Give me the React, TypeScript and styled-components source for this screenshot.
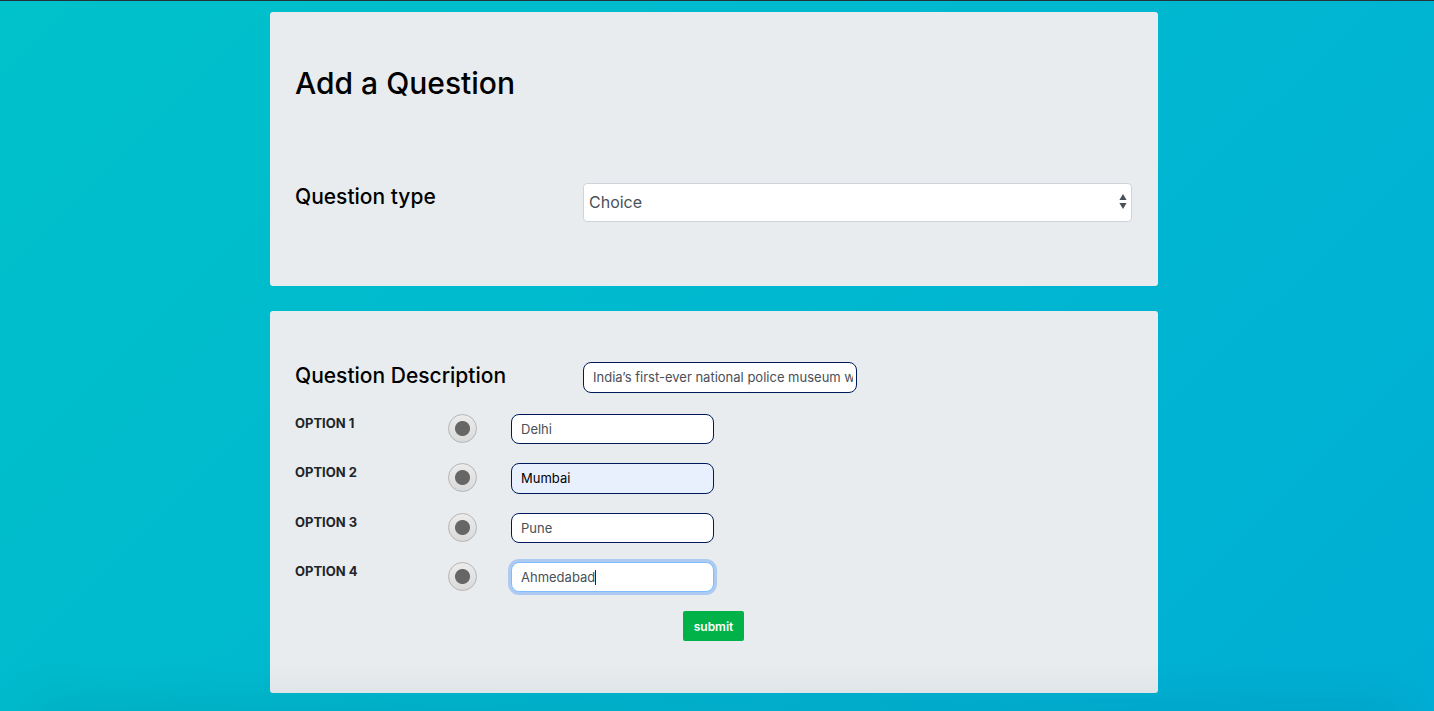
import React, { useState } from "react";
import styled, { createGlobalStyle } from "styled-components";

const GlobalStyle = createGlobalStyle`
  * { box-sizing: border-box; }
  body {
    margin: 0;
    font-family: Inter, "Liberation Sans", sans-serif;
    font-size: 13px;
    line-height: 20px;
    color: #212529;
  }
`;

const Page = styled.div`
  min-height: 100vh;
  padding: 11px 6px 18px 0;
  border-top: 1px solid #24323a;
  background: linear-gradient(135deg, #00c2ca, #00aed5);
  overflow: hidden;
`;

const BottomShade = styled.div`
  position: fixed;
  left: 30px;
  right: 30px;
  bottom: -20px;
  height: 20px;
  pointer-events: none;
  box-shadow: 0 0 50px rgba(0, 40, 60, 0.2);
`;

const Form = styled.form`
  display: flex;
  flex-direction: column;
  gap: 25px;
  max-width: 888px;
  margin: 0 auto;
`;

const Card = styled.section`
  padding: 51px 26px 52px 25px;
  border-radius: 3px;
  background: #e8ecef;
`;

const Title = styled.h1`
  margin: 0 0 80px;
  font-size: 30px;
  line-height: 40px;
  font-weight: 500;
  color: #000;
`;

const FieldRow = styled.div`
  display: grid;
  grid-template-columns: 288px 1fr;
  align-items: start;
`;

const FieldLabel = styled.label`
  font-size: 21px;
  line-height: 27px;
  font-weight: 500;
  color: #000;
`;

const SelectWrap = styled.div`
  position: relative;
  margin-bottom: 12px;
`;

const Select = styled.select`
  display: block;
  width: 100%;
  height: 39px;
  padding: 0 24px 2px 5px;
  border: 1px solid #ced4da;
  border-radius: 4px;
  background: #fff;
  color: #495057;
  font: 16px Inter, "Liberation Sans", sans-serif;
  appearance: none;
`;

const SelectArrows = styled.svg`
  position: absolute;
  top: 11px;
  right: 5px;
  pointer-events: none;
`;

const TextInput = styled.input`
  display: block;
  width: 100%;
  height: ${(p: { $autofilled?: boolean }) => (p.$autofilled ? "31px" : "30px")};
  padding: 0 9px 1px;
  border: 1px solid #001a5c;
  border-radius: 8px;
  outline: none;
  background: ${(p) => (p.$autofilled ? "#e8f0fe" : "#fff")};
  color: ${(p) => (p.$autofilled ? "#000" : "#495057")};
  font: 13px Inter, "Liberation Sans", sans-serif;

  &:focus {
    border-color: #80bdff;
    box-shadow: 0 0 0 3px #adcbf2;
    caret-color: transparent;
  }
`;

const DescriptionInput = styled(TextInput)`
  max-width: 274px;
  height: 31px;
  padding-right: 3px;
`;

const InputWrap = styled.div`
  position: relative;
`;

const Caret = styled.span`
  position: absolute;
  top: 8px;
  left: 84px;
  width: 1px;
  height: 15px;
  background: #212529;
  pointer-events: none;
`;

const Options = styled.div`
  display: flex;
  flex-direction: column;
  gap: 19px;
  margin: 21px 0 19px;
`;

const OptionRow = styled.div`
  display: grid;
  grid-template-columns: 153px 63px minmax(0, 203px);
  align-items: start;
`;

const OptionLabel = styled.label`
  font-weight: 700;
  line-height: 19px;
  text-transform: uppercase;
`;

const Radio = styled.input`
  width: 29px;
  height: 29px;
  margin: 0;
  border: 1px solid #b5b5b5;
  border-radius: 50%;
  appearance: none;
  background:
    radial-gradient(circle, #666 0 7px, transparent 8px),
    linear-gradient(#ececec, #dadada);
`;

const SubmitRow = styled.div`
  display: flex;
  justify-content: center;
`;

const SubmitButton = styled.button`
  height: 30px;
  padding: 0 11px;
  border: 0;
  border-radius: 2px;
  background: #00b248;
  color: #fff;
  font: 600 12px Inter, "Liberation Sans", sans-serif;
`;

const initialOptions = ["Delhi", "Mumbai", "Pune", "Ahmedabad"];

export default function App() {
  const [options, setOptions] = useState(initialOptions);
  const [description, setDescription] = useState(
    "India’s first-ever national police museum w"
  );
  const [pristine, setPristine] = useState(true);

  const updateOption = (index: number, value: string) => {
    setPristine(false);
    setOptions(options.map((o, n) => (n === index ? value : o)));
  };

  return (
    <>
      <GlobalStyle />
      <Page>
        <Form onSubmit={(e) => e.preventDefault()}>
          <Card>
            <Title>Add a Question</Title>
            <FieldRow>
              <FieldLabel htmlFor="type">Question type</FieldLabel>
              <SelectWrap>
                <Select id="type">
                  <option>Choice</option>
                </Select>
                <SelectArrows width="8" height="16" viewBox="0 0 8 16" aria-hidden="true">
                  <path d="M4 0L7.6 6H0.4ZM4 15L0.4 9H7.6Z" fill="#495057" />
                </SelectArrows>
              </SelectWrap>
            </FieldRow>
          </Card>
          <Card>
            <FieldRow>
              <FieldLabel htmlFor="description">Question Description</FieldLabel>
              <DescriptionInput
                id="description"
                value={description}
                onChange={(e) => setDescription(e.target.value)}
              />
            </FieldRow>
            <Options>
              {options.map((text, i) => (
                <OptionRow key={i}>
                  <OptionLabel htmlFor={`option-${i}`}>Option {i + 1}</OptionLabel>
                  <Radio type="radio" name="answer" aria-label={`Option ${i + 1} is correct`} />
                  <InputWrap>
                    <TextInput
                      id={`option-${i}`}
                      value={text}
                      $autofilled={i === 1}
                      autoFocus={i === 3}
                      onChange={(e) => updateOption(i, e.target.value)}
                    />
                    {pristine && i === 3 && <Caret />}
                  </InputWrap>
                </OptionRow>
              ))}
            </Options>
            <SubmitRow>
              <SubmitButton type="submit">submit</SubmitButton>
            </SubmitRow>
          </Card>
        </Form>
        <BottomShade />
      </Page>
    </>
  );
}
